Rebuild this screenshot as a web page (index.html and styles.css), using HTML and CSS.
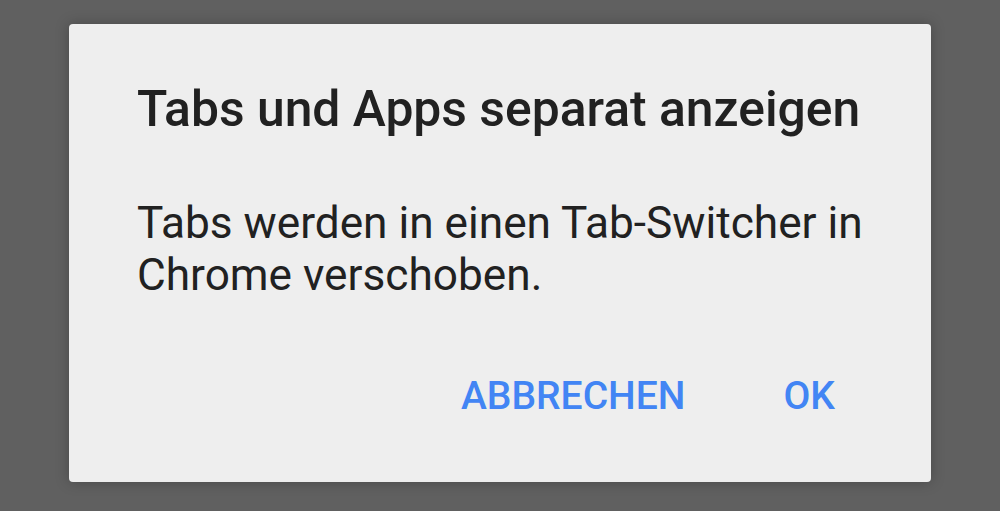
FILE: index.html
```html
<!DOCTYPE html>
<html lang="de">
<head>
<meta charset="utf-8">
<link rel="stylesheet" href="styles.css">
</head>
<body>
<div class="dialog">
  <h1 class="title">Tabs und Apps separat anzeigen</h1>
  <p class="message">Tabs werden in einen Tab-Switcher in Chrome verschoben.</p>
  <div class="actions">
    <button class="btn">ABBRECHEN</button>
    <button class="btn">OK</button>
  </div>
</div>
</body>
</html>
```
FILE: styles.css
```css
html, body {
  margin: 0;
  height: 100%;
}
body {
  background: #606060;
  padding: 24px 69px 29px 69px;
  box-sizing: border-box;
  font-family: Roboto, "Noto Sans", sans-serif;
}
.dialog {
  background: #eeeeee;
  border-radius: 4px;
  height: 458px;
  box-sizing: border-box;
  padding: 0 60px 0 68px;
  display: flex;
  flex-direction: column;
  box-shadow: 0 0 14px rgba(0,0,0,0.25);
}
.title {
  margin: 0;
  padding-top: 57px;
  font-size: 49.8px;
  line-height: 56px;
  font-weight: 500;
  color: #212121;
  white-space: nowrap;
}
.message {
  margin: 0;
  padding-top: 60px;
  padding-right: 8px;
  font-size: 44.2px;
  line-height: 52px;
  font-weight: 400;
  color: #212121;
}
.actions {
  display: flex;
  justify-content: flex-end;
  gap: 98px;
  margin-top: auto;
  padding-bottom: 62px;
  margin-right: 36px;
}
.btn {
  border: 0;
  background: none;
  padding: 0;
  font-family: inherit;
  font-size: 39px;
  font-weight: 500;
  color: #4285f4;
  line-height: 48px;
}
```
